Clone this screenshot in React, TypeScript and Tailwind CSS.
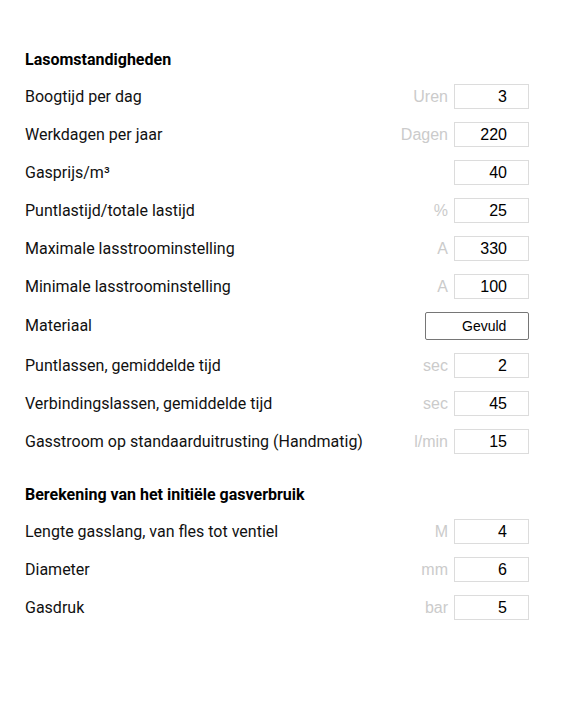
import React from 'react';

type Row = { label: string; unit?: string; value: string };

const lasRows: Row[] = [
  { label: 'Boogtijd per dag', unit: 'Uren', value: '3' },
  { label: 'Werkdagen per jaar', unit: 'Dagen', value: '220' },
  { label: 'Gasprijs/m³', value: '40' },
  { label: 'Puntlastijd/totale lastijd', unit: '%', value: '25' },
  { label: 'Maximale lasstroominstelling', unit: 'A', value: '330' },
  { label: 'Minimale lasstroominstelling', unit: 'A', value: '100' },
];

const lasRows2: Row[] = [
  { label: 'Puntlassen, gemiddelde tijd', unit: 'sec', value: '2' },
  { label: 'Verbindingslassen, gemiddelde tijd', unit: 'sec', value: '45' },
  { label: 'Gasstroom op standaarduitrusting (Handmatig)', unit: 'l/min', value: '15' },
];

const gasRows: Row[] = [
  { label: 'Lengte gasslang, van fles tot ventiel', unit: 'M', value: '4' },
  { label: 'Diameter', unit: 'mm', value: '6' },
  { label: 'Gasdruk', unit: 'bar', value: '5' },
];

const InputRow = ({ label, unit, value }: Row) => (
  <div className="flex items-center justify-between">
    <span className="text-[16px] text-[#111]">{label}</span>
    <div className="flex items-center">
      {unit && (
        <span className="mr-[6px] font-['Liberation_Sans',Arial,sans-serif] text-[16px] text-[#cbcbcb]">
          {unit}
        </span>
      )}
      <div className="flex h-[25px] w-[75px] items-center justify-end border border-[#dcdcdc] pr-[21px] font-['Liberation_Sans',Arial,sans-serif] text-[16px] text-black">
        {value}
      </div>
    </div>
  </div>
);

const App = () => {
  return (
    <div className="min-h-[701px] bg-white pt-[48px] pl-[25px] pr-[34px] font-['Roboto',sans-serif]">
      <div className="flex flex-col gap-[13px]">
        <h2 className="text-[16px] leading-[23px] font-bold text-black">Lasomstandigheden</h2>
        {lasRows.map((r) => (
          <InputRow key={r.label} {...r} />
        ))}
        <div className="flex items-center justify-between">
          <span className="text-[16px] text-[#111]">Materiaal</span>
          <div className="flex h-[28px] w-[104px] items-center rounded-[2px] border border-[#767676] pl-[36px] font-['Liberation_Sans',Arial,sans-serif] text-[14px] text-black">
            Gevuld
          </div>
        </div>
        {lasRows2.map((r) => (
          <InputRow key={r.label} {...r} />
        ))}
      </div>
      <div className="mt-[29px] flex flex-col gap-[13px]">
        <h2 className="text-[16px] leading-[23px] font-bold text-black">
          Berekening van het initiële gasverbruik
        </h2>
        {gasRows.map((r) => (
          <InputRow key={r.label} {...r} />
        ))}
      </div>
    </div>
  );
};

export default App;
